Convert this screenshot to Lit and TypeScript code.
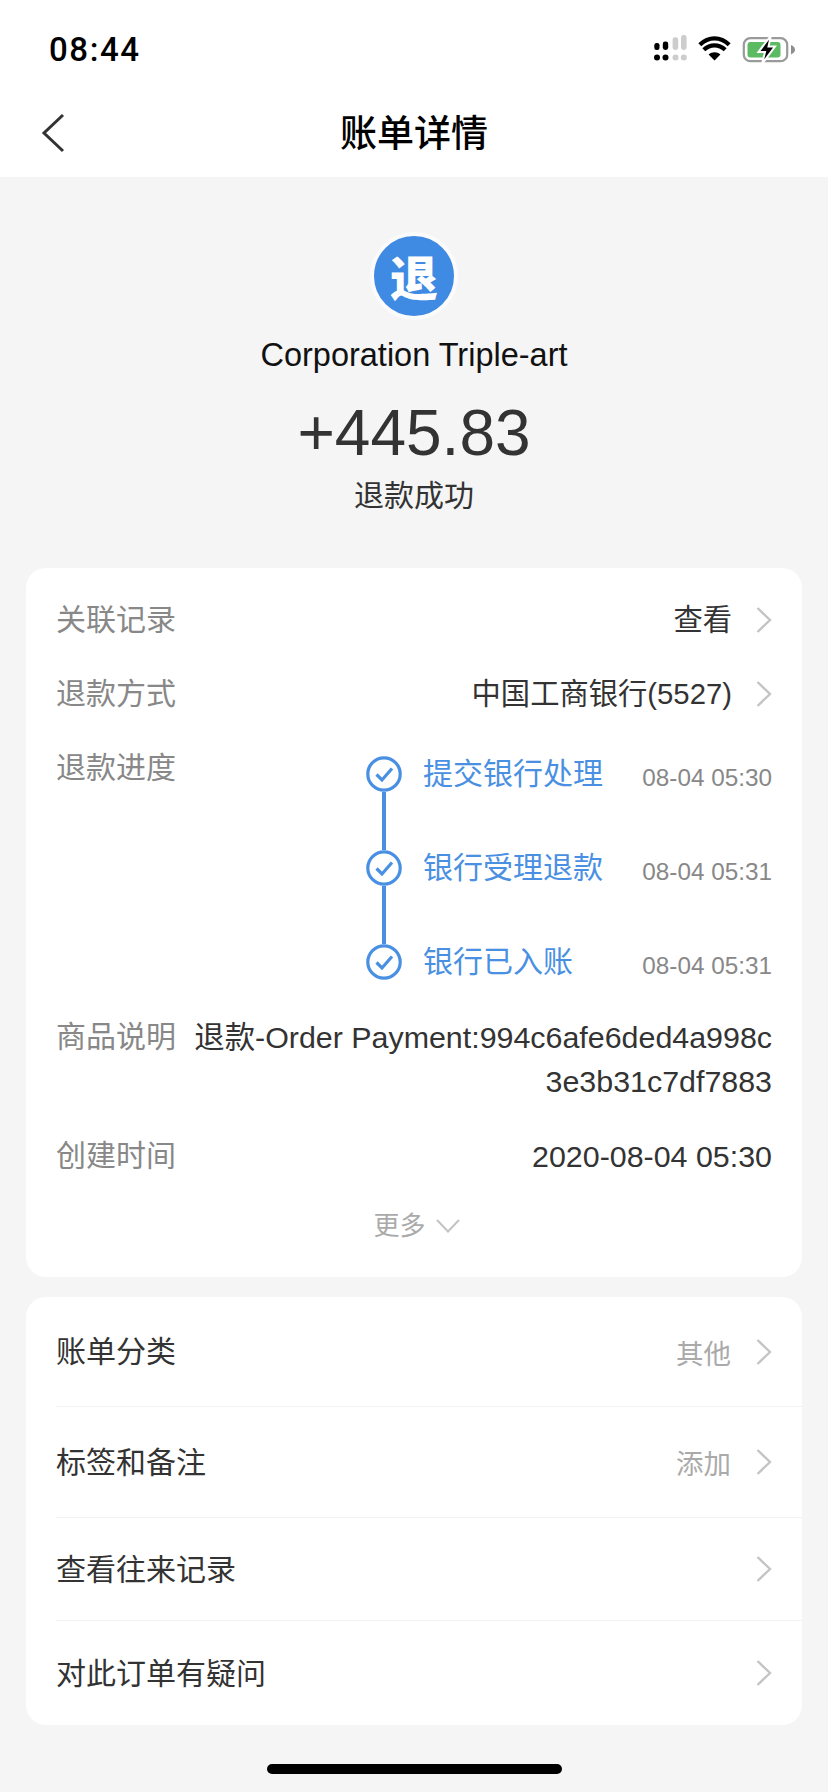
import { LitElement, html, css, svg } from 'lit';
import { customElement } from 'lit/decorators.js';

const chevronRight = svg`<svg class="chev" width="16" height="26" viewBox="0 0 16 26"><path d="M1.5 1 L14 13 L1.5 25" fill="none" stroke="#c4c4c4" stroke-width="2.4"/></svg>`;

const checkCircle = svg`<svg class="check" width="36" height="36" viewBox="0 0 36 36"><circle cx="18" cy="18" r="16.2" fill="#fff" stroke="#4a90e2" stroke-width="3.2"/><path d="M10.5 18.5 L16 24 L26 12.5" fill="none" stroke="#4a90e2" stroke-width="3.2"/></svg>`;

const statusIcons = svg`<svg width="142" height="28" viewBox="653 35 142 28">
  <g fill="#000">
    <rect x="653.3" y="43" width="5.2" height="7" rx="2.2"/>
    <rect x="661.8" y="41.6" width="5.4" height="8.4" rx="2.4"/>
    <circle cx="656" cy="57.5" r="3"/>
    <circle cx="664.5" cy="57.5" r="3"/>
  </g>
  <g fill="#cdcdcd">
    <rect x="671.6" y="37.3" width="5.6" height="12.7" rx="2.4"/>
    <rect x="680" y="35" width="5.6" height="15" rx="2.4"/>
    <circle cx="674.5" cy="57.5" r="3"/>
    <circle cx="682.8" cy="57.5" r="3"/>
  </g>
  <path d="M713.5 60.5 L707.6 54.6 C711 51.4 716 51.4 719.4 54.6 Z" fill="#000"/>
  <path d="M702.8 49.8 C709.2 43.8 717.8 43.8 724.2 49.8" fill="none" stroke="#000" stroke-width="4.2"/>
  <path d="M698.8 44.8 C707.6 36.2 719.4 36.2 728.2 44.8" fill="none" stroke="#000" stroke-width="4.2"/>
  <rect x="742.8" y="38.2" width="43.4" height="23" rx="6.5" fill="none" stroke="#9a9a9a" stroke-width="2.2"/>
  <path d="M790 45 C793 46 794 48 794 49.7 C794 51.4 793 53 790 54.4 Z" fill="#8e8e8e"/>
  <rect x="746.5" y="42" width="33" height="15.4" rx="3" fill="#5cbb62"/>
  <path d="M770 35.5 L757.5 52 L764 52 L761 64 L774 46.5 L767.5 46.5 Z" fill="#000" stroke="#fff" stroke-width="2"/>
</svg>`;

type Step = { name: string; time: string };

const steps: Step[] = [
  { name: '提交银行处理', time: '08-04 05:30' },
  { name: '银行受理退款', time: '08-04 05:31' },
  { name: '银行已入账', time: '08-04 05:31' },
];

type ActionRow = { name: string; value?: string; size: string };

const actions: ActionRow[] = [
  { name: '账单分类', value: '其他', size: 'a' },
  { name: '标签和备注', value: '添加', size: 'b' },
  { name: '查看往来记录', size: 'c' },
  { name: '对此订单有疑问', size: 'd' },
];

@customElement('app-root')
export class AppRoot extends LitElement {
  static styles = css`
    :host {
      display: block;
      width: 828px;
      height: 1792px;
      overflow: hidden;
      background: #f5f5f5;
      font-family: 'Liberation Sans', 'Noto Sans CJK SC', sans-serif;
      color: #333;
    }

    .top {
      background: #fff;
      height: 177px;
    }

    .status {
      height: 88px;
      display: flex;
      align-items: flex-start;
      justify-content: space-between;
      padding: 35px 32px 0 49px;
      box-sizing: border-box;
    }

    .clock {
      font-family: 'Roboto', sans-serif;
      font-weight: 500;
      font-size: 33px;
      line-height: 30px;
      letter-spacing: 1.6px;
      color: #000;
    }

    .nav {
      height: 89px;
      box-sizing: border-box;
      padding-bottom: 4px;
      display: flex;
      align-items: center;
      justify-content: center;
      position: relative;
    }

    .back {
      position: absolute;
      left: 41px;
      top: 25px;
    }

    .title {
      font-family: 'Noto Sans CJK SC', sans-serif;
      font-size: 37px;
      font-weight: 500;
      color: #000;
    }

    .hero {
      display: flex;
      flex-direction: column;
      align-items: center;
      padding-top: 55px;
    }

    .avatar {
      width: 80px;
      height: 80px;
      border-radius: 50%;
      border: 4px solid #fcfbfb;
      background: #3f8ae2;
      color: #fff;
      font-family: 'Noto Sans CJK SC', sans-serif;
      font-size: 48px;
      font-weight: 900;
      line-height: 78px;
      text-align: center;
    }

    .name {
      margin-top: 15px;
      font-size: 32.5px;
      line-height: 40px;
      color: #111;
    }

    .amount {
      margin-top: 23px;
      font-size: 64px;
      line-height: 70px;
      color: #333;
    }

    .result {
      margin-top: 6px;
      font-size: 30px;
      line-height: 44px;
      color: #333;
    }

    .card {
      background: #fff;
      border-radius: 20px;
      margin: 0 26px;
    }

    .details {
      margin-top: 50px;
      height: 709px;
      padding: 30px 30px 0;
      box-sizing: border-box;
    }

    .row {
      display: flex;
      justify-content: space-between;
      font-size: 30px;
      line-height: 44px;
      margin-bottom: 30px;
    }

    .label {
      color: #888;
      flex: none;
    }

    .value {
      display: flex;
      align-items: center;
      gap: 24px;
      font-size: 29.3px;
      color: #333;
    }

    .text-value {
      font-size: 30.4px;
      color: #333;
      text-align: right;
    }

    .timeline {
      width: 406px;
      margin-top: 10px;
    }

    .step {
      display: flex;
      height: 94px;
    }

    .step:last-child {
      height: 36px;
    }

    .rail {
      width: 36px;
      display: flex;
      flex-direction: column;
      align-items: center;
    }

    .check {
      flex: none;
    }

    .line {
      width: 4px;
      flex: 1;
      background: #4a90e2;
    }

    .step-name {
      margin-left: 21px;
      flex: 1;
      font-size: 30px;
      line-height: 36px;
      color: #4a90e2;
    }

    .step-time {
      font-size: 24.3px;
      line-height: 44px;
      color: #888;
    }

    .timeline-row {
      margin-bottom: 35px;
    }

    .desc-row {
      margin-bottom: 31px;
    }

    .more {
      display: flex;
      align-items: center;
      justify-content: center;
      gap: 10px;
      margin-top: 7px;
      padding-left: 5px;
      font-size: 26px;
      line-height: 36px;
      color: #aaa;
    }

    .actions {
      margin-top: 20px;
      height: 428px;
    }

    .action {
      display: flex;
      align-items: center;
      justify-content: space-between;
      margin-left: 30px;
      padding-right: 30px;
      font-size: 30px;
      color: #333;
      border-bottom: 1px solid #f2f2f2;
      box-sizing: border-box;
    }

    .action:last-child {
      border-bottom: none;
    }

    .action-name {
      padding-bottom: 5px;
    }

    .a { height: 110px; }
    .b { height: 111px; }
    .c { height: 103px; }
    .d { height: 104px; }

    .action-side {
      display: flex;
      align-items: center;
      gap: 25px;
      font-size: 27.5px;
      color: #aaa;
    }

    .home {
      width: 295px;
      height: 10px;
      border-radius: 5px;
      background: #000;
      margin: 39px auto 0;
    }
  `;

  render() {
    return html`
      <div class="top">
        <div class="status">
          <span class="clock">08:44</span>
          ${statusIcons}
        </div>
        <div class="nav">
          <svg class="back" width="24" height="40" viewBox="0 0 24 40">
            <path d="M22 2 L3 20 L22 38" fill="none" stroke="#333" stroke-width="3"/>
          </svg>
          <span class="title">账单详情</span>
        </div>
      </div>

      <div class="hero">
        <div class="avatar">退</div>
        <div class="name">Corporation Triple-art</div>
        <div class="amount">+445.83</div>
        <div class="result">退款成功</div>
      </div>

      <div class="card details">
        <div class="row">
          <span class="label">关联记录</span>
          <span class="value">查看 ${chevronRight}</span>
        </div>
        <div class="row">
          <span class="label">退款方式</span>
          <span class="value">中国工商银行(5527) ${chevronRight}</span>
        </div>
        <div class="row timeline-row">
          <span class="label">退款进度</span>
          <div class="timeline">
            ${steps.map(
              (step, i) => html`
                <div class="step">
                  <div class="rail">
                    ${checkCircle}
                    ${i < steps.length - 1 ? html`<div class="line"></div>` : ''}
                  </div>
                  <span class="step-name">${step.name}</span>
                  <span class="step-time">${step.time}</span>
                </div>
              `
            )}
          </div>
        </div>
        <div class="row desc-row">
          <span class="label">商品说明</span>
          <span class="text-value">退款-Order Payment:994c6afe6ded4a998c<br />3e3b31c7df7883</span>
        </div>
        <div class="row">
          <span class="label">创建时间</span>
          <span class="text-value">2020-08-04 05:30</span>
        </div>
        <div class="more">
          更多
          <svg width="24" height="14" viewBox="0 0 24 14">
            <path d="M1 1 L12 12.5 L23 1" fill="none" stroke="#c4c4c4" stroke-width="2"/>
          </svg>
        </div>
      </div>

      <div class="card actions">
        ${actions.map(
          (row) => html`
            <div class="action ${row.size}">
              <span class="action-name">${row.name}</span>
              <span class="action-side">${row.value ?? ''} ${chevronRight}</span>
            </div>
          `
        )}
      </div>

      <div class="home"></div>
    `;
  }
}
